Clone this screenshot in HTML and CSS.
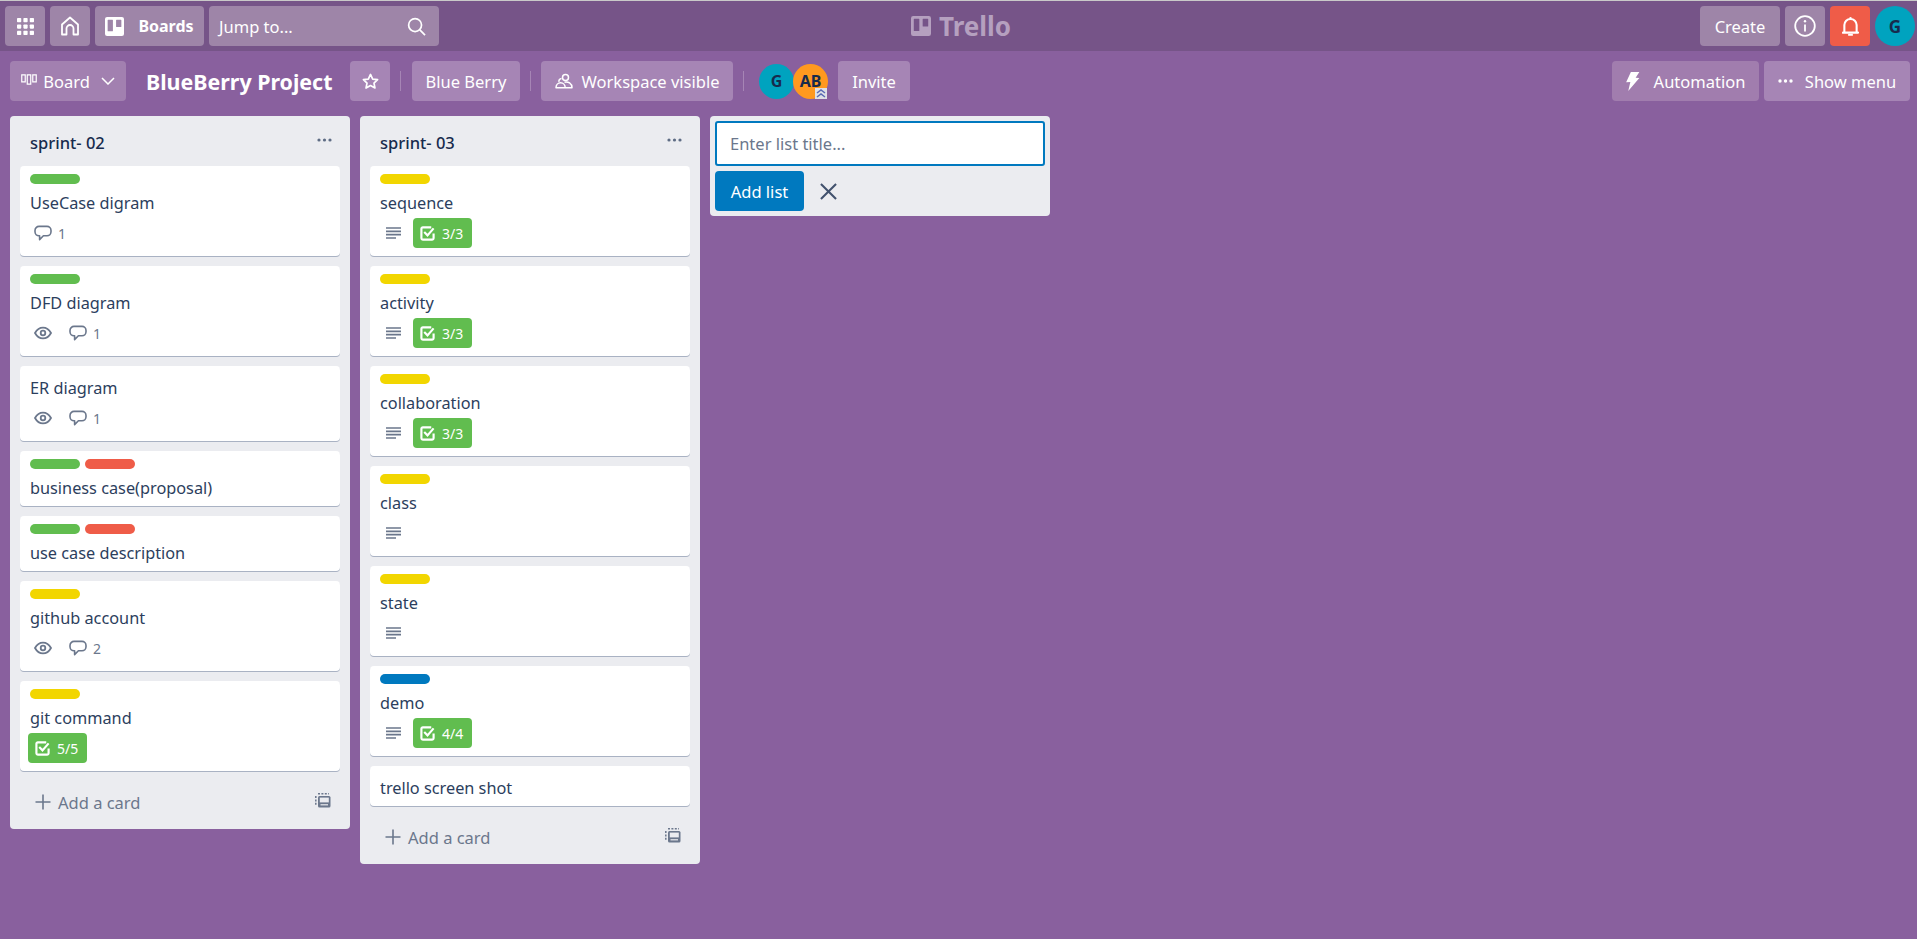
FILE: index.html
```html
<!DOCTYPE html>
<html lang="en">
<head>
	<meta charset="UTF-8">
	<title>BlueBerry Project | Trello</title>
	<meta name="viewport" content="width=device-width, initial-scale=1">
	<link rel="stylesheet" href="styles.css">
</head>
<body>
	<svg class="icon-defs" aria-hidden="true">
		<symbol id="i-comment" viewBox="0 0 18 18"><path d="M5 1.8h8a4 4 0 0 1 4 4v1.4a4 4 0 0 1-4 4H9.4L5.6 15v-3.8H5a4 4 0 0 1-4-4V5.800a4 4 0 0 1 4-4z" transform="translate(0 .6)" fill="none" stroke="currentColor" stroke-width="1.600" stroke-linejoin="round"/></symbol>
		<symbol id="i-eye" viewBox="0 0 18 18"><path d="M1 9c2-3.600 4.700-5.400 8-5.400s6 1.800 8 5.400c-2 3.600-4.700 5.400-8 5.400S3 12.600 1 9z" fill="none" stroke="currentColor" stroke-width="1.800"/><circle cx="9" cy="9" r="2.300" fill="none" stroke="currentColor" stroke-width="1.800"/></symbol>
		<symbol id="i-desc" viewBox="0 0 15 12"><path d="M0 1h15M0 4.300h15M0 7.600h15M0 11h10" stroke="currentColor" stroke-width="1.700"/></symbol>
		<symbol id="i-check" viewBox="0 0 16 16"><path d="M12 1.500H3A1.500 1.500 0 0 0 1.500 3v10A1.500 1.500 0 0 0 3 14.500h10a1.500 1.500 0 0 0 1.500-1.500V8" fill="none" stroke="currentColor" stroke-width="2.300"/><path d="M4.500 6.500 8 10l6.500-7.500" fill="none" stroke="currentColor" stroke-width="2.300"/></symbol>
		<symbol id="i-plus" viewBox="0 0 16 16"><path d="M8 .5v15M.5 8h15" stroke="currentColor" stroke-width="1.600"/></symbol>
		<symbol id="i-template" viewBox="0 0 16 16"><rect x="3" y="3" width="12.500" height="11.500" rx="1.500" fill="currentColor"/><rect x="4.800" y="4.600" width="9" height="4.800" fill="#ebecf0"/><path d="M3 .8h11M.8 3v10" stroke="currentColor" stroke-width="1.500" stroke-dasharray="2 1.400" fill="none"/><path d="M5.500 11.800h7.500" stroke="#ebecf0" stroke-width="1.200"/></symbol>
		<symbol id="i-boards" viewBox="0 0 18 18"><path d="M2 0h14a2 2 0 0 1 2 2v14a2 2 0 0 1-2 2H2a2 2 0 0 1-2-2V2a2 2 0 0 1 2-2zm1 2.500a.5.5 0 0 0-.5.500v10a.5.5 0 0 0 .5.500h4a.5.500 0 0 0 .5-.5V3a.5.5 0 0 0-.5-.5zm8 0a.5.5 0 0 0-.5.500v6a.5.5 0 0 0 .5.500h4a.5.500 0 0 0 .5-.5V3a.5.5 0 0 0-.5-.5z" fill="currentColor" fill-rule="evenodd"/></symbol>
	</svg>

	<header class="topbar">
		<div class="topbar-left">
			<button class="btn btn-top btn-square">
				<svg class="ico-apps" viewBox="0 0 18 18"><g fill="currentColor"><rect x="0" y="0" width="4.500" height="4.500" rx=".8"/><rect x="6.750" y="0" width="4.500" height="4.500" rx=".8"/><rect x="13.500" y="0" width="4.500" height="4.500" rx=".8"/><rect x="0" y="6.750" width="4.500" height="4.500" rx=".8"/><rect x="6.750" y="6.750" width="4.500" height="4.500" rx=".8"/><rect x="13.500" y="6.750" width="4.500" height="4.500" rx=".8"/><rect x="0" y="13.500" width="4.500" height="4.500" rx=".8"/><rect x="6.750" y="13.500" width="4.500" height="4.500" rx=".8"/><rect x="13.500" y="13.500" width="4.500" height="4.500" rx=".8"/></g></svg>
			</button>
			<button class="btn btn-top btn-square">
				<svg class="ico-home" viewBox="0 0 20 20"><path d="M2 18.500V8.500L10 1.500l8 7v10h-4.500v-6a3.500 3.500 0 0 0-7 0v6z" fill="none" stroke="currentColor" stroke-width="1.800" stroke-linejoin="round"/></svg>
			</button>
			<button class="btn btn-top btn-boards">
				<svg class="ico-boards"><use href="#i-boards"/></svg>
				<span>Boards</span>
			</button>
			<div class="search">
				<span>Jump to...</span>
				<svg class="ico-search" viewBox="0 0 20 20"><circle cx="8.500" cy="8.500" r="6.800" fill="none" stroke="currentColor" stroke-width="1.800"/><path d="m13.500 13.500 5.500 5.500" stroke="currentColor" stroke-width="1.800"/></svg>
			</div>
		</div>
		<div class="logo">
			<svg class="ico-logo"><use href="#i-boards"/></svg>
			<span>Trello</span>
		</div>
		<div class="topbar-right">
			<button class="btn btn-top btn-create">Create</button>
			<button class="btn btn-top btn-square">
				<svg class="ico-info" viewBox="0 0 22 22"><circle cx="11" cy="11" r="9.800" fill="none" stroke="currentColor" stroke-width="1.800"/><path d="M11 9.500v7" stroke="currentColor" stroke-width="1.800"/><circle cx="11" cy="6.300" r="1.200" fill="currentColor"/></svg>
			</button>
			<button class="btn btn-square btn-bell">
				<svg class="ico-bell" viewBox="0 0 18 20"><path d="M2.500 15.500V8.500a6.500 6.500 0 0 1 13 0v7l1.500 1H1z" fill="none" stroke="currentColor" stroke-width="2.200" stroke-linejoin="round"/><path d="M6.500 18.800h5" stroke="currentColor" stroke-width="2"/><path d="M9 0v2" stroke="currentColor" stroke-width="2"/></svg>
			</button>
			<div class="avatar avatar-me">G</div>
		</div>
	</header>

	<div class="boardbar">
		<button class="btn btn-board btn-view">
			<svg class="ico-view" viewBox="0 0 17 12"><path d="M.6 1h3.800v7.500H.6zM6.600 1h3.800v10H6.600zM12.600 1h3.800v7.500h-3.800z" fill="none" stroke="currentColor" stroke-width="1.300"/></svg>
			<span>Board</span>
			<svg class="ico-chevron" viewBox="0 0 14 8"><path d="m1 1 6 6 6-6" fill="none" stroke="currentColor" stroke-width="1.500"/></svg>
		</button>
		<h1 class="board-title">BlueBerry Project</h1>
		<button class="btn btn-board btn-square btn-star">
			<svg class="ico-star" viewBox="0 0 18 18"><path d="m9 1.500 2.300 4.900 5.200.7-3.800 3.600 1 5.200L9 13.300l-4.700 2.600 1-5.200L1.500 7.100l5.200-.7z" fill="none" stroke="currentColor" stroke-width="1.800" stroke-linejoin="round"/></svg>
		</button>
		<span class="divider"></span>
		<button class="btn btn-board btn-text">Blue Berry</button>
		<span class="divider divider-b"></span>
		<button class="btn btn-board btn-visible">
			<svg class="ico-team" viewBox="0 0 18 16"><circle cx="10.500" cy="4.500" r="3" fill="none" stroke="currentColor" stroke-width="1.500"/><path d="M1 14.800c0-3 2-5 4.600-5s4.600 2 4.600 5zM9.500 9.200c3.500-.8 7.500 1 7.500 5.600h-6.500" fill="none" stroke="currentColor" stroke-width="1.500" stroke-linejoin="round"/><path d="M6.500 5.500A2.700 2.700 0 0 0 4 8.800" fill="none" stroke="currentColor" stroke-width="1.500"/></svg>
			<span>Workspace visible</span>
		</button>
		<span class="divider divider-wide"></span>
		<div class="members">
			<div class="avatar avatar-small avatar-g">G</div>
			<div class="avatar avatar-small avatar-ab">
				AB
				<svg class="admin-mark" viewBox="0 0 12 11"><rect width="12" height="11" fill="#dfe1e6"/><path d="m2 5 4-3 4 3M2 9l4-3 4 3" fill="none" stroke="#5a6bb5" stroke-width="1.500"/></svg>
			</div>
		</div>
		<button class="btn btn-board btn-invite">Invite</button>
		<div class="boardbar-right">
			<button class="btn btn-automation">
				<svg class="ico-bolt" viewBox="0 0 13 18"><path d="M4.500 0h8L9 5.500l3.500.300L2 18l2-8.500-4 .300z" fill="currentColor"/></svg>
				<span>Automation</span>
			</button>
			<button class="btn btn-board btn-menu">
				<svg class="ico-dots" viewBox="0 0 15 4"><g fill="currentColor"><circle cx="2" cy="2" r="1.700"/><circle cx="7.500" cy="2" r="1.700"/><circle cx="13" cy="2" r="1.700"/></g></svg>
				<span>Show menu</span>
			</button>
		</div>
	</div>

	<main class="board">
		<section class="list">
			<div class="list-head">
				<h2>sprint- 02</h2>
				<svg class="ico-list-dots" viewBox="0 0 15 4"><g fill="currentColor"><circle cx="2" cy="2" r="1.600"/><circle cx="7.500" cy="2" r="1.600"/><circle cx="13" cy="2" r="1.600"/></g></svg>
			</div>
			<article class="card">
				<div class="labels"><span class="label green"></span></div>
				<div class="card-title has-badges">UseCase digram</div>
				<div class="badges">
					<span class="badge"><svg class="ico-comment"><use href="#i-comment"/></svg></span><span class="count">1</span>
				</div>
			</article>
			<article class="card">
				<div class="labels"><span class="label green"></span></div>
				<div class="card-title has-badges">DFD diagram</div>
				<div class="badges">
					<span class="badge"><svg class="ico-eye"><use href="#i-eye"/></svg></span>
					<span class="badge"><svg class="ico-comment"><use href="#i-comment"/></svg></span><span class="count">1</span>
				</div>
			</article>
			<article class="card">
				<div class="card-title has-badges">ER diagram</div>
				<div class="badges">
					<span class="badge"><svg class="ico-eye"><use href="#i-eye"/></svg></span>
					<span class="badge"><svg class="ico-comment"><use href="#i-comment"/></svg></span><span class="count">1</span>
				</div>
			</article>
			<article class="card">
				<div class="labels"><span class="label green"></span><span class="label red"></span></div>
				<div class="card-title">business case(proposal)</div>
			</article>
			<article class="card">
				<div class="labels"><span class="label green"></span><span class="label red"></span></div>
				<div class="card-title">use case description</div>
			</article>
			<article class="card">
				<div class="labels"><span class="label yellow"></span></div>
				<div class="card-title has-badges">github account</div>
				<div class="badges">
					<span class="badge"><svg class="ico-eye"><use href="#i-eye"/></svg></span>
					<span class="badge"><svg class="ico-comment"><use href="#i-comment"/></svg></span><span class="count">2</span>
				</div>
			</article>
			<article class="card">
				<div class="labels"><span class="label yellow"></span></div>
				<div class="card-title has-badges">git command</div>
				<div class="badges">
					<span class="check-badge"><svg class="ico-check"><use href="#i-check"/></svg>5/5</span>
				</div>
			</article>
			<div class="list-foot">
				<svg class="ico-plus"><use href="#i-plus"/></svg>
				<span>Add a card</span>
				<svg class="ico-template"><use href="#i-template"/></svg>
			</div>
		</section>

		<section class="list">
			<div class="list-head">
				<h2>sprint- 03</h2>
				<svg class="ico-list-dots" viewBox="0 0 15 4"><g fill="currentColor"><circle cx="2" cy="2" r="1.600"/><circle cx="7.500" cy="2" r="1.600"/><circle cx="13" cy="2" r="1.600"/></g></svg>
			</div>
			<article class="card">
				<div class="labels"><span class="label yellow"></span></div>
				<div class="card-title has-badges">sequence</div>
				<div class="badges">
					<span class="badge"><svg class="ico-desc"><use href="#i-desc"/></svg></span>
					<span class="check-badge"><svg class="ico-check"><use href="#i-check"/></svg>3/3</span>
				</div>
			</article>
			<article class="card">
				<div class="labels"><span class="label yellow"></span></div>
				<div class="card-title has-badges">activity</div>
				<div class="badges">
					<span class="badge"><svg class="ico-desc"><use href="#i-desc"/></svg></span>
					<span class="check-badge"><svg class="ico-check"><use href="#i-check"/></svg>3/3</span>
				</div>
			</article>
			<article class="card">
				<div class="labels"><span class="label yellow"></span></div>
				<div class="card-title has-badges">collaboration</div>
				<div class="badges">
					<span class="badge"><svg class="ico-desc"><use href="#i-desc"/></svg></span>
					<span class="check-badge"><svg class="ico-check"><use href="#i-check"/></svg>3/3</span>
				</div>
			</article>
			<article class="card">
				<div class="labels"><span class="label yellow"></span></div>
				<div class="card-title has-badges">class</div>
				<div class="badges">
					<span class="badge"><svg class="ico-desc"><use href="#i-desc"/></svg></span>
				</div>
			</article>
			<article class="card">
				<div class="labels"><span class="label yellow"></span></div>
				<div class="card-title has-badges">state</div>
				<div class="badges">
					<span class="badge"><svg class="ico-desc"><use href="#i-desc"/></svg></span>
				</div>
			</article>
			<article class="card">
				<div class="labels"><span class="label blue"></span></div>
				<div class="card-title has-badges">demo</div>
				<div class="badges">
					<span class="badge"><svg class="ico-desc"><use href="#i-desc"/></svg></span>
					<span class="check-badge"><svg class="ico-check"><use href="#i-check"/></svg>4/4</span>
				</div>
			</article>
			<article class="card">
				<div class="card-title">trello screen shot</div>
			</article>
			<div class="list-foot">
				<svg class="ico-plus"><use href="#i-plus"/></svg>
				<span>Add a card</span>
				<svg class="ico-template"><use href="#i-template"/></svg>
			</div>
		</section>

		<section class="list list-new">
			<input class="list-input" type="text" placeholder="Enter list title...">
			<div class="list-new-actions">
				<button class="btn-add">Add list</button>
				<svg class="ico-close" viewBox="0 0 18 18"><path d="m1 1 16 16M17 1 1 17" stroke="currentColor" stroke-width="2.200"/></svg>
			</div>
		</section>
	</main>
</body>
</html>
```

FILE: styles.css
```css
* {
	box-sizing: border-box;
}

html,
body {
	height: 100%;
}

body {
	margin: 0;
	border-top: 1px solid #c9c9c9;
	font-family: "Noto Sans", "Open Sans", sans-serif;
	font-size: 16.500px;
	color: #172b4d;
	background-color: #89609e;
	overflow: hidden;
}

svg {
	display: block;
	flex: none;
}

.icon-defs {
	display: none;
}

/* buttons */
.btn {
	display: flex;
	align-items: center;
	justify-content: center;
	height: 40px;
	padding: 0;
	border: 0;
	border-radius: 4px;
	font: inherit;
	color: #fff;
	background: none;
}

.btn-top {
	background-color: #9e85a8;
}

.btn-board {
	background-color: #a685b5;
}

.btn-square {
	width: 40px;
}

/* top bar */
.topbar {
	display: flex;
	align-items: center;
	height: 50px;
	padding: 0 2px 0 5px;
	background-color: #765488;
}

.topbar-left,
.topbar-right {
	display: flex;
	align-items: center;
	gap: 5px;
}

.topbar-right {
	margin-left: auto;
}

.ico-apps {
	width: 17px;
	height: 17px;
}

.ico-home {
	width: 20px;
	height: 20px;
}

.btn-boards {
	gap: 14px;
	width: 109px;
	font-size: 16px;
	font-weight: 700;
}

.ico-boards {
	width: 19px;
	height: 19px;
}

.search {
	display: flex;
	align-items: center;
	justify-content: space-between;
	width: 230px;
	height: 40px;
	padding: 0 13px 0 10px;
	border-radius: 4px;
	color: #fff;
	background-color: #9e85a8;
}

.ico-search {
	width: 19px;
	height: 19px;
}

.logo {
	display: flex;
	align-items: center;
	gap: 8px;
	margin-left: 472px;
	font-size: 26px;
	font-weight: 700;
	line-height: 20px;
	color: #b5a0bf;
}

.ico-logo {
	width: 20px;
	height: 20px;
}

.btn-create {
	width: 80px;
}

.ico-info {
	width: 22px;
	height: 22px;
}

.btn-bell {
	background-color: #ef5c48;
}

.ico-bell {
	width: 17px;
	height: 19px;
}

.avatar {
	display: flex;
	align-items: center;
	justify-content: center;
	border-radius: 50%;
	font-weight: 700;
	color: #172b4d;
}

.avatar-me {
	width: 40px;
	height: 40px;
	font-size: 17px;
	background-color: #00a3bf;
}

/* board bar */
.boardbar {
	display: flex;
	align-items: center;
	height: 60px;
	padding: 0 7px 0 10px;
}

.btn-view {
	gap: 6px;
	width: 116px;
	background-color: #a280b0;
}

.ico-view {
	width: 16px;
	height: 11px;
	margin-top: -3px;
}

.ico-chevron {
	width: 14px;
	height: 8px;
	margin-left: 5px;
}

.board-title {
	width: 185px;
	margin: 0 19px 0 20px;
	font-size: 21.400px;
	font-weight: 700;
	white-space: nowrap;
	color: #fff;
}

.ico-star {
	width: 17px;
	height: 17px;
}

.divider {
	width: 1px;
	height: 20px;
	margin: 0 11px 0 10px;
	background-color: #a685b5;
}

.divider-b {
	margin-right: 10px;
}

.divider-wide {
	margin-right: 15px;
}

.btn-text {
	width: 108px;
}

.btn-visible {
	gap: 9px;
	width: 192px;
}

.ico-team {
	width: 18px;
	height: 16px;
}

.members {
	display: flex;
	margin-right: 10px;
}

.avatar-small {
	position: relative;
	width: 35px;
	height: 35px;
	font-size: 16px;
}

.avatar-g {
	background-color: #00a3bf;
}

.avatar-ab {
	margin-left: -1px;
	background-color: #ff991f;
}

.admin-mark {
	position: absolute;
	right: 1px;
	bottom: 0;
	width: 12px;
	height: 11px;
}

.btn-invite {
	width: 72px;
}

.boardbar-right {
	display: flex;
	gap: 5px;
	margin-left: auto;
}

.btn-automation {
	gap: 14px;
	width: 147px;
	background-color: #a17dae;
}

.ico-bolt {
	width: 14px;
	height: 19px;
}

.btn-menu {
	gap: 12px;
	width: 146px;
}

.ico-dots {
	width: 15px;
	height: 4px;
}

/* lists */
.board {
	display: flex;
	align-items: flex-start;
	gap: 10px;
	padding: 5px 10px 0;
}

.list {
	display: flex;
	flex-direction: column;
	width: 340px;
	padding: 0 10px 8px;
	border-radius: 4px;
	background-color: #ebecf0;
}

.list-head {
	display: flex;
	align-items: center;
	justify-content: space-between;
	height: 50px;
	padding: 3px 8px 0 10px;
}

.list-head h2 {
	margin: 0;
	font-size: 16.500px;
	font-weight: 500;
	color: #172b4d;
}

.ico-list-dots {
	width: 15px;
	height: 4px;
	margin-top: -5px;
	color: #5e6c84;
}

.card {
	margin-bottom: 10px;
	padding: 8px;
	border-radius: 4px;
	background-color: #fff;
	box-shadow: 0 1px 0 #a9b2c3;
}

.labels {
	display: flex;
	gap: 5px;
	margin: 0 2px 5px;
}

.label {
	width: 50px;
	height: 10px;
	border-radius: 5px;
}

.green {
	background-color: #61bd4f;
}

.red {
	background-color: #ef5c48;
}

.yellow {
	background-color: #f2d600;
}

.blue {
	background-color: #0079bf;
}

.card-title {
	margin-bottom: -1px;
	padding: 4px 2px 0;
	font-size: 16.300px;
	line-height: 21px;
	color: #2c3e5d;
}

.has-badges {
	margin-bottom: 4px;
}

.badges {
	display: flex;
	align-items: center;
	height: 30px;
	color: #6b778c;
}

.badge {
	display: flex;
	align-items: center;
	justify-content: center;
	width: 30px;
	height: 30px;
	margin-right: 5px;
}

.count {
	margin-left: -5px;
	font-size: 14px;
}

.ico-comment,
.ico-eye {
	width: 18px;
	height: 18px;
}

.ico-desc {
	width: 15px;
	height: 12px;
}

.check-badge {
	display: flex;
	align-items: center;
	gap: 7px;
	width: 59px;
	height: 30px;
	padding-left: 7px;
	border-radius: 4px;
	font-size: 14px;
	color: #fff;
	background-color: #61bd4f;
}

.ico-check {
	width: 15px;
	height: 15px;
}

.list-foot {
	display: flex;
	align-items: center;
	height: 42px;
	padding: 0 9px 0 15px;
	margin-bottom: -2px;
	font-size: 16.500px;
	color: #6b778c;
}

.ico-plus {
	width: 16px;
	height: 16px;
	margin-right: 7px;
}

.ico-template {
	width: 16px;
	height: 16px;
	margin-left: auto;
	margin-top: -2px;
}

/* add list form */
.list-new {
	height: 100px;
	padding: 5px;
}

.list-input {
	width: 330px;
	height: 45px;
	padding: 0 13px;
	border: 2px solid #0079bf;
	border-radius: 3px;
	outline: 0;
	font: inherit;
	color: #172b4d;
	background-color: #fff;
}

.list-input::placeholder {
	color: #6b778c;
	opacity: 1;
}

.list-new-actions {
	display: flex;
	align-items: center;
	gap: 16px;
	margin-top: 5px;
}

.btn-add {
	width: 89px;
	height: 40px;
	padding: 0;
	border: 0;
	border-radius: 4px;
	font: inherit;
	color: #fff;
	background-color: #0079bf;
}

.ico-close {
	width: 17px;
	height: 17px;
	color: #42526e;
}
```
